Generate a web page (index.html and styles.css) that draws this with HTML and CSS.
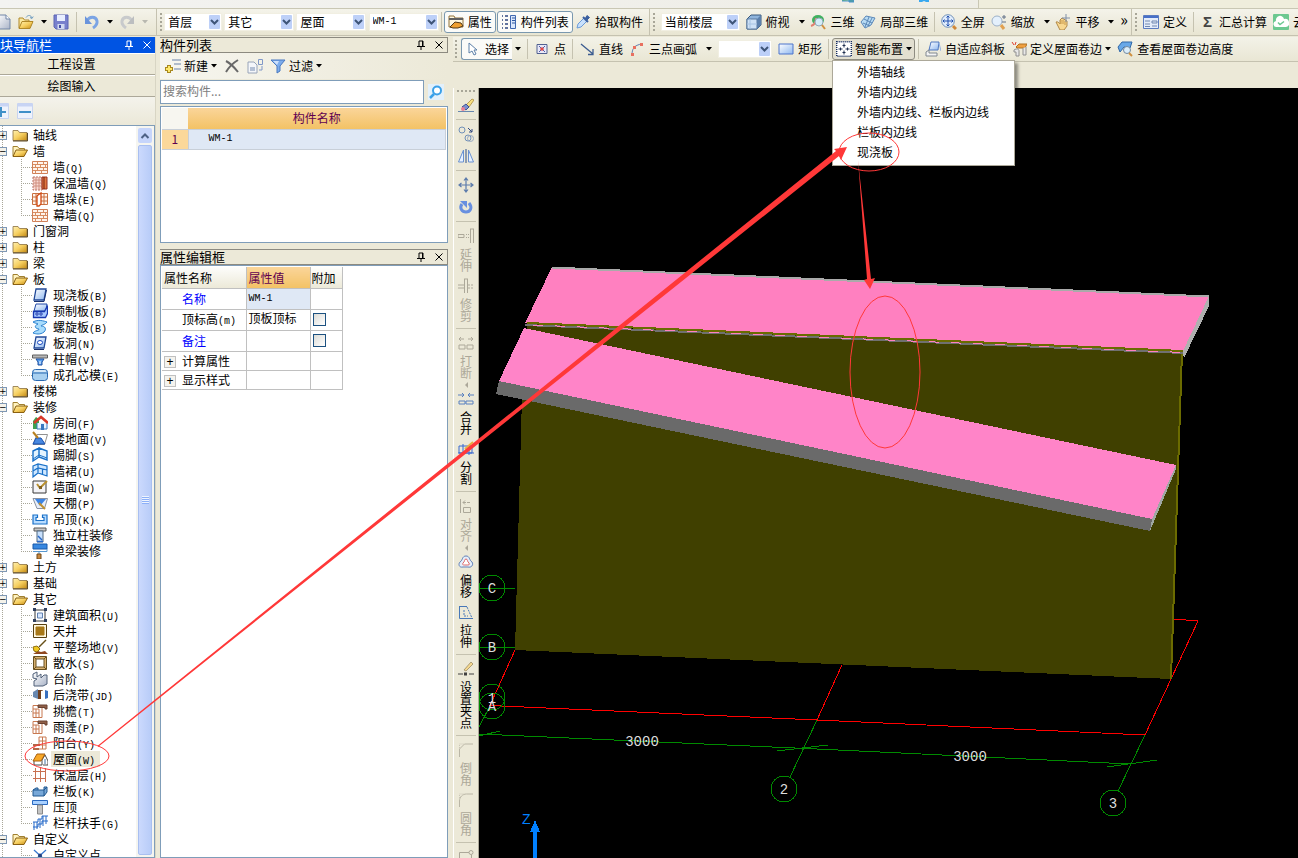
FILE: index.html
```
<!DOCTYPE html>
<html lang="zh-CN">

<head>
    <meta charset="UTF-8">
    <meta name="viewport" content="width=device-width, initial-scale=1.0">
    <title>屋面 - 绘图输入</title>
    <link rel="stylesheet" href="styles.css">
</head>

<body>
    <svg class="sprite" width="0" height="0" aria-hidden="true">
        <defs>
            <linearGradient id="gold" x1="0" y1="0" x2="1" y2="1"><stop offset="0" stop-color="#fff0b0"/><stop offset=".5" stop-color="#f6cf60"/><stop offset="1" stop-color="#c48a14"/></linearGradient>
            <linearGradient id="sky" x1="0" y1="0" x2="1" y2="1"><stop offset="0" stop-color="#fff"/><stop offset="1" stop-color="#8fb8f0"/></linearGradient>
            <linearGradient id="grey" x1="0" y1="0" x2="1" y2="1"><stop offset="0" stop-color="#fff"/><stop offset="1" stop-color="#aab4c8"/></linearGradient>
        </defs>
        <!-- 通用 -->
        <symbol id="down" viewBox="0 0 6 4"><path d="M0 0h6L3 3.5z"/></symbol>
        <symbol id="chev" viewBox="0 0 11 14"><rect width="11" height="14" rx="1" fill="#bdd0f8"/><path d="M2 5l3.500 3.500L9 5" fill="none" stroke="#3e5578" stroke-width="2"/></symbol>
        <symbol id="pin" viewBox="0 0 10 10"><path d="M3 1h4v5M3 1v5M6.500 1v5M1 6.500h8M5 6v4" fill="none" stroke="currentColor"/></symbol>
        <symbol id="close" viewBox="0 0 10 10"><path d="M1.500 1.500l7 7M8.500 1.500l-7 7" fill="none" stroke="currentColor"/></symbol>
        <symbol id="folder" viewBox="0 0 16 16"><path d="M1 13V3.500h5l1.500 2H15V13.500H1z" fill="url(#gold)" stroke="#8a7040" stroke-width=".8"/><path d="M1 14h14.500V6" fill="none" stroke="#5c4a28"/></symbol>
        <symbol id="open" viewBox="0 0 16 16"><path d="M1 13V3.500h4.500l1.500 2h5.500V8" fill="#fff3c0" stroke="#a08030"/><path d="M1 13.500L4 7h11.500l-3.500 6.500z" fill="url(#gold)" stroke="#8a6010"/></symbol>
        <!-- 主工具栏 -->
        <symbol id="new" viewBox="0 0 16 16"><path d="M2 1h9l4 4v10H2z" fill="url(#grey)" stroke="#7387a8"/><path d="M11 1v4h4" fill="#fff" stroke="#7387a8"/></symbol>
        <symbol id="openfile" viewBox="0 0 16 16"><path d="M1 14V4h4l1.500 2H11v2" fill="#fbe9a0" stroke="#b08828"/><path d="M1 14.500L4 7.500h11l-3 7z" fill="url(#gold)" stroke="#b08828"/><path d="M8 3.500C10 .5 13 1 14 4m-2-.5l2 1 1.200-2" fill="none" stroke="#6f9cc0"/></symbol>
        <symbol id="save" viewBox="0 0 16 16"><path d="M1 1h14v14H3l-2-2z" fill="#7880cc" stroke="#5a64b4"/><path d="M4 1h8v6H4z" fill="#e8eeff"/><path d="M4.500 10h7v5h-7z" fill="#d0d8f0"/><path d="M6 11h2v3H6z" fill="#4450a8"/></symbol>
        <symbol id="undo" viewBox="0 0 16 16"><path d="M3 7c2-5 9-5 10 0 .5 3-1 5-4 7" fill="none" stroke="#7ba4e4" stroke-width="3"/><path d="M1 2v8h7z" fill="#6a94dc"/></symbol>
        <symbol id="redo" viewBox="0 0 16 16"><path d="M13 7c-2-5-9-5-10 0-.5 3 1 5 4 7" fill="none" stroke="#c8cacc" stroke-width="3"/><path d="M15 2v8H8z" fill="#bcbec0"/></symbol>
        <symbol id="prop" viewBox="0 0 16 16"><path d="M1 2h5l1 2h8v9H1z" fill="#fff8e0" stroke="#907038"/><path d="M1 5h14" stroke="#606060" stroke-width="2"/><path d="M2 13l5-5 6 1 2 3-5 2H5z" fill="#f0a030" stroke="#503818"/></symbol>
        <symbol id="complist" viewBox="0 0 16 16"><path d="M1 2h1M4 2h3M1 6h1M4 6h3M1 10h1M4 10h3M1 14h1M4 14h3" stroke="#304880" stroke-width="1.500"/><path d="M9.500 1.500h5v13h-5z" fill="#dce8fc" stroke="#4068b0"/><path d="M11 4h3M11 6.500h3M11 9h3" stroke="#3058a0"/></symbol>
        <symbol id="pick" viewBox="0 0 16 16"><path d="M2 14l1-4 6-6 3 3-6 6z" fill="#c8e0fc" stroke="#6c9cd8"/><path d="M8 3l5 5" stroke="#3c60a0" stroke-width="2"/><path d="M10 5l2-3.500 2.500 2L12 6" fill="#3c60a0" stroke="#3c60a0"/></symbol>
        <symbol id="cube" viewBox="0 0 16 16"><path d="M1 5l4-4h10v10l-4 4H1z" fill="#8fb4dc" stroke="#38587c"/><path d="M1 5h10v10H1z" fill="#cfe2f6" stroke="#5878a0"/><path d="M11 5l4-4v10l-4 4z" fill="#5c80ac"/><path d="M4 5v10M1 10h10" stroke="#a8c4e4"/></symbol>
        <symbol id="orbit" viewBox="0 0 16 16"><ellipse cx="8" cy="6" rx="6" ry="5" fill="#40b060"/><path d="M1 12c3-1 5-4 5-8" fill="none" stroke="#e08070" stroke-width="2"/><circle cx="9" cy="8" r="4" fill="#d4ecf8" stroke="#90a8b8"/><path d="M12 11l3 4" stroke="#d09040" stroke-width="2"/></symbol>
        <symbol id="part3d" viewBox="0 0 16 16"><path d="M1 8l5-6 9 2-4 7-6 3z" fill="#b8dcf4" stroke="#5c88b8"/><path d="M4 5l8 4M3 9l7 3M9 3L5 13M12 4L8 12" stroke="#5c88b8"/></symbol>
        <symbol id="full" viewBox="0 0 16 16"><circle cx="7" cy="7" r="6.300" fill="#e0ecfc" stroke="#7090b8"/><path d="M7 2v10M2 7h10M5.500 3.500L7 2l1.500 1.500M5.500 10.500L7 12l1.500-1.500M3.500 5.500L2 7l1.500 1.500M10.500 5.500L12 7l-1.500 1.500" fill="none" stroke="#2050b0"/><path d="M12 12l3 3" stroke="#d08838" stroke-width="3"/></symbol>
        <symbol id="zoom" viewBox="0 0 16 16"><circle cx="6" cy="7" r="5" fill="#e4f0fc" stroke="#9cb0c8"/><path d="M10 11l3 4" stroke="#e0a050" stroke-width="3"/><path d="M11 3h4M13 1v4M11 8h4" stroke="#607088"/></symbol>
        <symbol id="pan" viewBox="0 0 16 16"><path d="M1 8c2-1 4 2 4 2V6l2-2 5 3v5l-3 4H5z" fill="#f8d890" stroke="#b08848"/><path d="M6 6v4M8 6v4M10 7v4" stroke="#c89848"/><path d="M11 0v8M7 4h8" stroke="#8090a8"/></symbol>
        <symbol id="define" viewBox="0 0 16 16"><path d="M.5 1.500h15v13H.5z" fill="#e4ecfa" stroke="#5c7cc0"/><path d="M1 3h14" stroke="#4870c8" stroke-width="2"/><path d="M2 7h5M2 10h5M2 12.500h5M9 7h5v2H9zM9 12h5" fill="none" stroke="#7088b0"/></symbol>
        <symbol id="cloud" viewBox="0 0 16 16"><rect width="16" height="16" rx="1" fill="#6cc890"/><path d="M4 13a3 3 0 0 1-1-6 4 4 0 0 1 8-2 4 4 0 0 1 2 8z" fill="#fff"/><path d="M5 8.500l2 2 4-3" fill="none" stroke="#6cc890" stroke-width="1.500"/></symbol>
        <!-- 绘图工具栏 -->
        <symbol id="cursor" viewBox="0 0 16 16"><path d="M4 2v10l3-2 2 4 2-1-2-4h3z" fill="#fff" stroke="#5c80a8"/></symbol>
        <symbol id="point" viewBox="0 0 16 16"><path d="M3 3.500h10v9H3z" fill="#e8e8f8" stroke="#506090"/><path d="M5 5l6 6M11 5l-6 6" stroke="#5060a8"/><circle cx="8" cy="8" r="1.800" fill="#e04848"/></symbol>
        <symbol id="line" viewBox="0 0 16 16"><path d="M2 3l12 10M14 8v5.500H9" fill="none" stroke="#3c5c90" stroke-width="1.300"/></symbol>
        <symbol id="arc" viewBox="0 0 16 16"><path d="M3 14C3 8 5 4 13 3" fill="none" stroke="#6080b0"/><path d="M2 12h3v3H2zM4 5h3v3H4zM11 2h3v3h-3z" fill="#e87060"/></symbol>
        <symbol id="rect" viewBox="0 0 16 16"><path d="M1 3h14v10H1z" fill="url(#sky)" stroke="#4c74cc"/></symbol>
        <symbol id="smart" viewBox="0 0 16 16"><path d="M.7 .7h14.600v14.600H.7z" fill="#fff" stroke="#102860" stroke-width="1.400" stroke-dasharray="1 1"/><path d="M8 2.500v4M8 9.500v4M2.500 8h4M9.500 8h4M6.500 4.500h3M6.500 11.500h3M4.500 6.500v3M11.500 6.500v3" stroke="#203050"/></symbol>
        <symbol id="slope" viewBox="0 0 16 16"><path d="M6 1h8l-1 8H4z" fill="url(#sky)" stroke="#5078c0"/><path d="M14 2l2 8" stroke="#90b0e0"/><path d="M1 11l3-2v3h8v3H1z" fill="#f4f4f4" stroke="#808890"/></symbol>
        <symbol id="curl" viewBox="0 0 16 16"><path d="M5 6l3-3h8l-2 4H6z" fill="#f0a040" stroke="#b07020"/><path d="M3 9c3-2 5-1 5 1v5H5v-4H3zM12 7v7h3V6" fill="#e8e8e8" stroke="#909090"/><path d="M1 1l2 3M5 1L4 4" stroke="#e04030"/></symbol>
        <symbol id="curlview" viewBox="0 0 16 16"><path d="M1 6l4-5h10l-2 6-6-1-4 5z" fill="#68a8e8" stroke="#3068a8"/><circle cx="10" cy="9" r="3.500" fill="#dceefa" stroke="#7088a0"/><path d="M12 12l3 3" stroke="#d09040" stroke-width="2"/></symbol>
        <!-- 构件列表 -->
        <symbol id="add" viewBox="0 0 16 16"><path d="M7 2h9M9 6h7M9 11h7" stroke="#98a8c0" stroke-width="1.500"/><path d="M4 7v8M0 11h8" stroke="#a88820" stroke-width="4"/><path d="M4 8v6M1 11h6" stroke="#ffe868" stroke-width="2"/></symbol>
        <symbol id="del" viewBox="0 0 16 16"><path d="M2 3c4 2 8 6 12 11M14 2C9 5 5 9 2 14" fill="none" stroke="#686868" stroke-width="2"/></symbol>
        <symbol id="copy" viewBox="0 0 16 16"><path d="M1 4h6l3 3v8H1z" fill="#f4f6fa" stroke="#98a4b8"/><path d="M3 9h5v4H3z" fill="#b4c0d4"/><path d="M11.500 1.500h4v5h-4zM15 8v4h-3" fill="none" stroke="#8098c8"/></symbol>
        <symbol id="filter" viewBox="0 0 16 16"><path d="M1 2h14l-5 6v5l-3 2V8z" fill="#7cacec" stroke="#4878c0"/><path d="M3 3h6L7 7z" fill="#cce0fc"/></symbol>
        <symbol id="find" viewBox="0 0 16 16"><rect width="16" height="16" fill="#e2f0fb"/><circle cx="9" cy="6.500" r="4" fill="#fff" stroke="#3aa0e8" stroke-width="2"/><path d="M6 10l-4 4" stroke="#3aa0e8" stroke-width="2.500"/></symbol>
        <symbol id="plus" viewBox="0 0 16 16"><path d="M.5 .5h15v15H.5z" fill="#eef2fc" stroke="#c8d4f0"/><path d="M1 2h14" stroke="#c8d4f4" stroke-width="3"/><path d="M3 9h10M8 4v10" stroke="#4090c8" stroke-width="2"/></symbol>
        <symbol id="minus" viewBox="0 0 16 16"><path d="M.5 .5h15v15H.5z" fill="#eef2fc" stroke="#c8d4f0"/><path d="M1 2h14" stroke="#c8d4f4" stroke-width="3"/><path d="M2 9h12" stroke="#4090c8" stroke-width="2"/></symbol>
        <!-- 构件树 -->
        <symbol id="brick" viewBox="0 0 16 16"><path d="M.5 2.500h15v12H.5z" fill="#fff4ec" stroke="#d08058"/><path d="M1 5.500h14M1 8.500h14M1 11.500h14M5.500 3v2.500M11.500 3v2.500M3.500 6v2.500M8.500 6v2.500M13.500 6v2.500M5.500 9v2.500M11.500 9v2.500M3.500 12v2.500M9.500 12v2.500" stroke="#d88c60"/></symbol>
        <symbol id="brickhot" viewBox="0 0 16 16"><path d="M1 2h9v13H1z" fill="#f8d8d0" stroke="#b87060" stroke-dasharray="2 1"/><path d="M1 5h9M1 8h9M1 11h9M4 2v13M7 2v13" stroke="#d09080"/><path d="M10 2h5v12h-5z" fill="#e07840" stroke="#983020"/><path d="M12 2v12" stroke="#782010"/></symbol>
        <symbol id="pier" viewBox="0 0 16 16"><path d="M.5 2.500h15v11H.5zM1 6h14M1 10h14M4 3v10M12 3v10" fill="#fff4ec" stroke="#c87040"/><path d="M6 4l3-2v11l-2 2H5V5z" fill="#fff" stroke="#d04810" stroke-width="1.300"/></symbol>
        <symbol id="slab" viewBox="0 0 16 16"><path d="M4 2h10l-2 11H2z" fill="url(#sky)" stroke="#204898" stroke-width="1.300"/><path d="M2 14.500h10L14.500 3" fill="none" stroke="#183070"/></symbol>
        <symbol id="precast" viewBox="0 0 16 16"><path d="M4 1h11l-1 7H2z" fill="url(#sky)" stroke="#2048a8"/><path d="M1.500 8.500h11l3-6v8l-2 4h-12z" fill="#a8c8ff" stroke="#1838b0" stroke-width="1.300"/><path d="M4 10h2v2H4zM8 10h2v2H8z" fill="#fff" stroke="#1838b0"/></symbol>
        <symbol id="spiral" viewBox="0 0 16 16"><path d="M1 3c5-3 11-1 14 0-2 3-6 3-6 4 4 0 6 3 3 6-4 3-8 2-11 1 2-3 6-2 6-4-3 0-6-3-1-5-2-1-4-1-5-2z" fill="#a8dcfc" stroke="#2880d0"/></symbol>
        <symbol id="hole" viewBox="0 0 16 16"><path d="M4 2h10l-2 11H2z" fill="url(#sky)" stroke="#204898" stroke-width="1.300"/><ellipse cx="8" cy="7.500" rx="2.500" ry="2" fill="#fff" stroke="#1848c0"/><path d="M2 14.500h10" stroke="#183070"/></symbol>
        <symbol id="cap" viewBox="0 0 16 16"><path d="M.5 4h15v3H.5z" fill="#b8b8b8" stroke="#606060"/><path d="M4 8h8l-2 3v3H6v-3z" fill="#58a0f0" stroke="#2050a0"/><path d="M7.500 10h1v3h-1z" fill="#fff"/></symbol>
        <symbol id="core" viewBox="0 0 16 16"><rect x=".5" y="2.500" width="15" height="11" rx="3" fill="#a8d0f0" stroke="#2868b0"/><path d="M1 6h14" stroke="#2868b0"/><path d="M2 4h12" stroke="#fff"/></symbol>
        <symbol id="room" viewBox="0 0 16 16"><path d="M1 6l3-4 3 2v10H1z" fill="#40a050"/><path d="M5 8v6h10V8" fill="#e8f4ff" stroke="#3878c0"/><path d="M2 8l7-6 7 6" fill="none" stroke="#d83828" stroke-width="2.500"/><path d="M9 9h3v6H9z" fill="#3878c0"/></symbol>
        <symbol id="floor" viewBox="0 0 16 16"><path d="M5 3.500h10.500l-3 10H1z" fill="#fff" stroke="#909090"/><path d="M4 7h5l4 6H1z" fill="#4888e0" stroke="#1850b0"/><path d="M1 1l5 6" stroke="#b88020" stroke-width="2"/></symbol>
        <symbol id="skirt" viewBox="0 0 16 16"><path d="M1 4l6-3v9l-6 4zM7 1l8 3v9l-8-3z" fill="#e4f4ff" stroke="#1870c8" stroke-width="1.400"/><path d="M1 12l6-4 8 3" fill="none" stroke="#1870c8"/></symbol>
        <symbol id="dado" viewBox="0 0 16 16"><path d="M1 3l5-2 9 2v10l-9-3-5 4zM1 8l5-3 9 2M6 1v9M10.500 6v5" fill="#d0e8ff" stroke="#1870c8" stroke-width="1.200"/></symbol>
        <symbol id="wallface" viewBox="0 0 16 16"><path d="M1 2h13v12H1z" fill="#f4f4f8" stroke="#383838"/><path d="M5 5l3 4 7-7" fill="none" stroke="#b89030" stroke-width="2"/><path d="M7 7h3v3H7z" fill="#806020"/></symbol>
        <symbol id="ceiling" viewBox="0 0 16 16"><path d="M1 3.500h14.500l-3 10H5z" fill="#e8eef8" stroke="#8890a0"/><path d="M3 4h11l-6 7z" fill="#3c84e4"/><path d="M7 8l6 6" stroke="#c09030" stroke-width="2"/></symbol>
        <symbol id="hang" viewBox="0 0 16 16"><path d="M1 4h4.500v2.500H4v3h8v-3h-1.500V4H15v9H1z" fill="#b8dcff" stroke="#1870c8" stroke-width="1.200"/></symbol>
        <symbol id="column" viewBox="0 0 16 16"><path d="M2 1h12v3H2z" fill="#c8c8c8" stroke="#585858"/><path d="M5 4h6v11H5z" fill="#c8e0fc" stroke="#506880"/><path d="M6 9l4 4M5 14.500h6" stroke="#2868c8" stroke-width="1.500"/></symbol>
        <symbol id="beamdec" viewBox="0 0 16 16"><path d="M1 1h14v5H1z" fill="#3888e0" stroke="#1858a8"/><path d="M1 8.500h14V6M7 8v3" fill="none" stroke="#5898d0"/><path d="M5 11h4v5H5z" fill="#c88840" stroke="#704818"/></symbol>
        <symbol id="area" viewBox="0 0 16 16"><path d="M3 3h10v11H3z" fill="#fff" stroke="#383838"/><path d="M5.500 6h5v5h-5z" fill="#d8e8ff" stroke="#6080b0"/><path d="M1 1h3v3H1zM12 1h3v3h-3zM1 12h3v3H1zM12 12h3v3h-3z" fill="#304060"/></symbol>
        <symbol id="patio" viewBox="0 0 16 16"><path d="M1.500 1.500h13v13h-13z" fill="#fff8e0" stroke="#584010"/><path d="M4 4h8v8H4z" fill="#a87818" stroke="#a87818"/></symbol>
        <symbol id="level" viewBox="0 0 16 16"><path d="M1 15l5-3 3 1 4-1 3 3z" fill="#904820"/><path d="M14 1L7 8" stroke="#685018" stroke-width="1.500"/><path d="M1 8l4-1 3 3-3 3-3-1z" fill="#f0c820" stroke="#907010"/></symbol>
        <symbol id="apron" viewBox="0 0 16 16"><path d="M1.500 1.500h13v13h-13z" fill="#d8b070" stroke="#685020"/><path d="M4 4h8v8H4z" fill="#fff" stroke="#685020"/><path d="M2 2l2 2M14 2l-2 2M2 14l2-2M14 14l-2-2" stroke="#685020"/></symbol>
        <symbol id="steps" viewBox="0 0 16 16"><path d="M1 3l4-2v5l4-3v4l3-3h3v9l-4 2H2v-5l3-2-4-1z" fill="url(#grey)" stroke="#506078"/></symbol>
        <symbol id="strip" viewBox="0 0 16 16"><path d="M1 5l5-3v10l-5-2z" fill="#6888b0"/><path d="M6 3h5v9H6z" fill="#704020"/><path d="M9 4l4-1v8l-4 2z" fill="#fff"/><path d="M13 3l3 1v7l-3 1z" fill="#3870c0"/></symbol>
        <symbol id="eave" viewBox="0 0 16 16"><path d="M1 2.500h9v12H1zM1 6h6M1 10h6M4 6v8M7 6v9" fill="#fff" stroke="#c87850"/><path d="M6 2h9v4h-2V4.500H6z" fill="#906048" stroke="#684030"/></symbol>
        <symbol id="balcony" viewBox="0 0 16 16"><path d="M7 2h7v12H2v-4h5zM7 6h7M7 10h7M10.500 2v12" fill="#fff" stroke="#c87850"/><path d="M1 9h7v2H1zM1 13h6v2H1z" fill="#b06848"/></symbol>
        <symbol id="roof" viewBox="0 0 16 16"><path d="M2 9v5h8V9l3-5 3 6v4h-5" fill="#fff" stroke="#484848"/><path d="M5 3h8l-4 7H1z" fill="#f8a828" stroke="#a86010"/><path d="M12 8h2v5h-2z" fill="#a0b8d0"/></symbol>
        <symbol id="insul" viewBox="0 0 16 16"><path d="M3.500 1v14M8.500 1v14M13.500 1v14M1 4.500h13M1 11.500h13" stroke="#c87050"/></symbol>
        <symbol id="railslab" viewBox="0 0 16 16"><path d="M1 7h11v6H1zM12 7l3-3v5l-3 4M1 7l3-2h2v2M12 7V4h3" fill="#78a8d8" stroke="#205890"/></symbol>
        <symbol id="coping" viewBox="0 0 16 16"><path d="M.5 1.500h15v4H.5z" fill="#a8d0ff" stroke="#2868c0"/><path d="M5.500 6h5v9h-5z" fill="#c4c4c4" stroke="#888"/></symbol>
        <symbol id="handrail" viewBox="0 0 16 16"><path d="M1 7h5V4h4V1h6M1 12h5V9h4V6h6M2 7v8M5 7v7M8 4v9M11 1v10M14 1v8" fill="none" stroke="#2468c8"/></symbol>
        <symbol id="custom" viewBox="0 0 16 16"><path d="M2 3l12 11M14 3L2 14" stroke="#3878d0" stroke-width="1.300"/><circle cx="8" cy="8.500" r="2" fill="#204080"/></symbol>
        <!-- 修改工具栏 -->
        <symbol id="erase" viewBox="0 0 16 16"><path d="M8 8l6-6 2 1-5 7z" fill="#f8e080" stroke="#a08030" stroke-width=".7"/><path d="M4 10l4-3 3 3-3 3z" fill="#7890d0" stroke="#405090"/><circle cx="5" cy="12" r="2" fill="#e88098"/><path d="M0 14.500h16" stroke="#6888b0"/></symbol>
        <symbol id="copy2" viewBox="0 0 16 16"><circle cx="4" cy="4" r="3" fill="none" stroke="#7090b8"/><circle cx="10" cy="12" r="3" fill="none" stroke="#7090b8"/><circle cx="12.500" cy="12.500" r="3" fill="none" stroke="#98a8c0"/><path d="M10 2l4 4M14 3v3h-3" fill="none" stroke="#304880"/></symbol>
        <symbol id="mirror" viewBox="0 0 16 16"><path d="M5.500 2v12h-5zM10.500 2v12h5z" fill="#e8f2ff" stroke="#6890d0"/><path d="M8 1v14" stroke="#305088"/></symbol>
        <symbol id="move" viewBox="0 0 16 16"><path d="M8 1v14M1 8h14M6 3.500L8 1l2 2.500M6 12.500L8 15l2-2.500M3.500 6L1 8l2.500 2M12.500 6L15 8l-2.500 2" fill="none" stroke="#5c7cac" stroke-width="1.200"/></symbol>
        <symbol id="rotate" viewBox="0 0 16 16"><path d="M4 5c-3 4 0 8 4 8s7-4 3-9" fill="none" stroke="#6890e0" stroke-width="3"/><path d="M2 2h7v7z" fill="#6890e0"/></symbol>
        <symbol id="extend" viewBox="0 0 16 16"><path d="M0 6.500h6v3H0zM8 6.500h1M8 9.500h1M10 6.500h1M10 9.500h1M12.500 1v14M15.500 1v14M12 1h4" fill="none" stroke="#aca899"/></symbol>
        <symbol id="trim" viewBox="0 0 16 16"><path d="M0 7h6M0 10h6M6.500 1v14M9.500 1v14M6 1h4M10 7h2M13 7h2M10 10h2M13 10h2" stroke="#aca899"/></symbol>
        <symbol id="breaks" viewBox="0 0 16 16"><path d="M1 4h5M10 4h5M3 2L1 4l2 2M13 2l2 2-2 2M1 10h6v4H1zM9 10h6v4H9z" fill="none" stroke="#aca899"/></symbol>
        <symbol id="merge" viewBox="0 0 16 16"><path d="M0 4h6M10 4h6M4 2l2 2-2 2M12 2l-2 2 2 2M1 10h6v3H1zM8 10h7v3H8z" fill="none" stroke="#5880c0"/></symbol>
        <symbol id="split" viewBox="0 0 16 16"><path d="M1 5h13v7H1zM5 3v11M11 5v9M0 12h16" fill="none" stroke="#3868d0"/><path d="M7 8l8-7" stroke="#e8b040" stroke-width="2"/></symbol>
        <symbol id="align" viewBox="0 0 16 16"><path d="M2.500 1v14M5 4.500h3M5 4.500l2-2M5 4.500l2 2M9 4.500h3M5.500 9.500h7v5h-7z" fill="none" stroke="#aca899"/></symbol>
        <symbol id="offset" viewBox="0 0 16 16"><path d="M8 2c4 0 3 4 6 6 2 3-1 6-4 5H5C1 14 0 10 2 8c3-2 2-6 6-6z" fill="#e4eefa" stroke="#6080b8"/><path d="M8 5c2 0 1 3 3 4 1 2 0 2-3 2s-4 0-3-2c2-1 1-4 3-4z" fill="#fff" stroke="#e06868"/></symbol>
        <symbol id="stretch" viewBox="0 0 16 16"><path d="M1.500 2.500H9M1.500 2v12.500H15" fill="none" stroke="#4878b8"/><path d="M9 3l5 11M6 6v6h4" fill="none" stroke="#4878b8" stroke-dasharray="2 1"/></symbol>
        <symbol id="grip" viewBox="0 0 16 16"><path d="M6 9l7-8 2 2-7 7z" fill="#f4d890" stroke="#908058" stroke-width=".7"/><path d="M0 13h5M11 13h5" stroke="#404040"/><path d="M6 11.500h3v3H6z" fill="#404040"/></symbol>
        <symbol id="chamfer" viewBox="0 0 16 16"><path d="M1.500 15V7l5-5H15" fill="none" stroke="#bab6a6"/><path d="M1.500 6V2H6" fill="none" stroke="#cac6b6" stroke-dasharray="1 1"/></symbol>
        <symbol id="round" viewBox="0 0 16 16"><path d="M1.500 15V9c0-4 3-7 7-7H15" fill="none" stroke="#bab6a6"/><path d="M1.500 6V2H6" fill="none" stroke="#cac6b6" stroke-dasharray="1 1"/></symbol>
        <symbol id="more" viewBox="0 0 16 16"><path d="M1.500 15V3.500H11M13.500 6v9" fill="none" stroke="#aca899"/><circle cx="13" cy="3.500" r="2" fill="none" stroke="#aca899"/></symbol>
    </svg>

    <div class="ribbon">
        <div class="ribbon-tab">
            <svg class="bit" viewBox="0 0 12 3"><path d="M0 0v1h12M7 0h5v2H7z" fill="#58b848" stroke="#4890d0"/></svg>
            <svg class="bit" viewBox="0 0 12 3"><path d="M1 0h10v2H8L6 1 4 2H1z" fill="#38a8f0"/></svg>
        </div>
    </div>

    <header class="toolbars">
        <div class="band band-file">
            <button class="tool" aria-label="新建文件"><svg class="ic"><use href="#new"/></svg></button>
            <button class="tool" aria-label="打开"><svg class="ic"><use href="#openfile"/></svg></button>
            <button class="tool" aria-label="打开列表"><svg class="dn"><use href="#down"/></svg></button>
            <button class="tool" aria-label="保存"><svg class="ic"><use href="#save"/></svg></button>
            <i class="sep"></i>
            <button class="tool" aria-label="撤销"><svg class="ic"><use href="#undo"/></svg></button>
            <button class="tool" aria-label="撤销列表"><svg class="dn"><use href="#down"/></svg></button>
            <button class="tool" aria-label="恢复"><svg class="ic"><use href="#redo"/></svg></button>
            <button class="tool off" aria-label="恢复列表"><svg class="dn"><use href="#down"/></svg></button>
        </div>
        <div class="band band-comp">
            <i class="grip"></i>
            <span class="combo narrow"><select aria-label="楼层"><option>首层</option></select><svg><use href="#chev"/></svg></span>
            <span class="combo"><select aria-label="构件分类"><option>其它</option></select><svg><use href="#chev"/></svg></span>
            <span class="combo"><select aria-label="构件类型"><option>屋面</option></select><svg><use href="#chev"/></svg></span>
            <span class="combo mono"><select aria-label="构件"><option>WM-1</option></select><svg><use href="#chev"/></svg></span>
            <i class="sep"></i>
            <div class="pair">
                <button class="tool on"><svg class="ic"><use href="#prop"/></svg>属性</button>
                <button class="tool on"><svg class="ic"><use href="#complist"/></svg>构件列表</button>
            </div>
            <button class="tool"><svg class="ic"><use href="#pick"/></svg>拾取构件</button>
        </div>
        <div class="band band-view">
            <i class="grip"></i>
            <span class="combo wide"><select aria-label="显示楼层"><option>当前楼层</option></select><svg><use href="#chev"/></svg></span>
            <button class="tool drop"><svg class="ic"><use href="#cube"/></svg>俯视<svg class="dn"><use href="#down"/></svg></button>
            <button class="tool"><svg class="ic"><use href="#orbit"/></svg>三维</button>
            <button class="tool"><svg class="ic"><use href="#part3d"/></svg>局部三维</button>
            <i class="sep"></i>
            <button class="tool"><svg class="ic"><use href="#full"/></svg>全屏</button>
            <button class="tool drop"><svg class="ic"><use href="#zoom"/></svg>缩放<svg class="dn"><use href="#down"/></svg></button>
            <button class="tool drop"><svg class="ic"><use href="#pan"/></svg>平移<svg class="dn"><use href="#down"/></svg></button>
            <button class="tool more">»</button>
        </div>
        <div class="band band-calc">
            <i class="grip"></i>
            <button class="tool"><svg class="ic"><use href="#define"/></svg>定义</button>
            <i class="sep"></i>
            <button class="tool"><b class="sigma">Σ</b>汇总计算</button>
            <button class="tool"><svg class="ic"><use href="#cloud"/></svg>云</button>
        </div>
    </header>

    <main class="work">
        <!-- 模块导航 -->
        <nav class="nav">
            <h2 class="cap cap-active">块导航栏
                <span><button aria-label="固定"><svg><use href="#pin"/></svg></button><button aria-label="关闭"><svg><use href="#close"/></svg></button></span>
            </h2>
            <button class="mod">工程设置</button>
            <button class="mod">绘图输入</button>
            <div class="nav-tools">
                <button class="tool" aria-label="全部展开"><svg class="ic"><use href="#plus"/></svg></button>
                <button class="tool" aria-label="全部折叠"><svg class="ic"><use href="#minus"/></svg></button>
            </div>
            <div class="treebox">
                <ul class="tree">
                    <li><button class="tg">+</button><svg class="ic"><use href="#folder"/></svg><a href="#">轴线</a></li>
                    <li><button class="tg">−</button><svg class="ic"><use href="#open"/></svg><a href="#">墙</a>
                        <ul>
                            <li><svg class="ic"><use href="#brick"/></svg><a href="#">墙<kbd>(Q)</kbd></a></li>
                            <li><svg class="ic"><use href="#brickhot"/></svg><a href="#">保温墙<kbd>(Q)</kbd></a></li>
                            <li><svg class="ic"><use href="#pier"/></svg><a href="#">墙垛<kbd>(E)</kbd></a></li>
                            <li><svg class="ic"><use href="#brick"/></svg><a href="#">幕墙<kbd>(Q)</kbd></a></li>
                        </ul>
                    </li>
                    <li><button class="tg">+</button><svg class="ic"><use href="#folder"/></svg><a href="#">门窗洞</a></li>
                    <li><button class="tg">+</button><svg class="ic"><use href="#folder"/></svg><a href="#">柱</a></li>
                    <li><button class="tg">+</button><svg class="ic"><use href="#folder"/></svg><a href="#">梁</a></li>
                    <li><button class="tg">−</button><svg class="ic"><use href="#open"/></svg><a href="#">板</a>
                        <ul>
                            <li><svg class="ic"><use href="#slab"/></svg><a href="#">现浇板<kbd>(B)</kbd></a></li>
                            <li><svg class="ic"><use href="#precast"/></svg><a href="#">预制板<kbd>(B)</kbd></a></li>
                            <li><svg class="ic"><use href="#spiral"/></svg><a href="#">螺旋板<kbd>(B)</kbd></a></li>
                            <li><svg class="ic"><use href="#hole"/></svg><a href="#">板洞<kbd>(N)</kbd></a></li>
                            <li><svg class="ic"><use href="#cap"/></svg><a href="#">柱帽<kbd>(V)</kbd></a></li>
                            <li><svg class="ic"><use href="#core"/></svg><a href="#">成孔芯模<kbd>(E)</kbd></a></li>
                        </ul>
                    </li>
                    <li><button class="tg">+</button><svg class="ic"><use href="#folder"/></svg><a href="#">楼梯</a></li>
                    <li><button class="tg">−</button><svg class="ic"><use href="#open"/></svg><a href="#">装修</a>
                        <ul>
                            <li><svg class="ic"><use href="#room"/></svg><a href="#">房间<kbd>(F)</kbd></a></li>
                            <li><svg class="ic"><use href="#floor"/></svg><a href="#">楼地面<kbd>(V)</kbd></a></li>
                            <li><svg class="ic"><use href="#skirt"/></svg><a href="#">踢脚<kbd>(S)</kbd></a></li>
                            <li><svg class="ic"><use href="#dado"/></svg><a href="#">墙裙<kbd>(U)</kbd></a></li>
                            <li><svg class="ic"><use href="#wallface"/></svg><a href="#">墙面<kbd>(W)</kbd></a></li>
                            <li><svg class="ic"><use href="#ceiling"/></svg><a href="#">天棚<kbd>(P)</kbd></a></li>
                            <li><svg class="ic"><use href="#hang"/></svg><a href="#">吊顶<kbd>(K)</kbd></a></li>
                            <li><svg class="ic"><use href="#column"/></svg><a href="#">独立柱装修</a></li>
                            <li><svg class="ic"><use href="#beamdec"/></svg><a href="#">单梁装修</a></li>
                        </ul>
                    </li>
                    <li><button class="tg">+</button><svg class="ic"><use href="#folder"/></svg><a href="#">土方</a></li>
                    <li><button class="tg">+</button><svg class="ic"><use href="#folder"/></svg><a href="#">基础</a></li>
                    <li><button class="tg">−</button><svg class="ic"><use href="#open"/></svg><a href="#">其它</a>
                        <ul>
                            <li><svg class="ic"><use href="#area"/></svg><a href="#">建筑面积<kbd>(U)</kbd></a></li>
                            <li><svg class="ic"><use href="#patio"/></svg><a href="#">天井</a></li>
                            <li><svg class="ic"><use href="#level"/></svg><a href="#">平整场地<kbd>(V)</kbd></a></li>
                            <li><svg class="ic"><use href="#apron"/></svg><a href="#">散水<kbd>(S)</kbd></a></li>
                            <li><svg class="ic"><use href="#steps"/></svg><a href="#">台阶</a></li>
                            <li><svg class="ic"><use href="#strip"/></svg><a href="#">后浇带<kbd>(JD)</kbd></a></li>
                            <li><svg class="ic"><use href="#eave"/></svg><a href="#">挑檐<kbd>(T)</kbd></a></li>
                            <li><svg class="ic"><use href="#eave"/></svg><a href="#">雨蓬<kbd>(P)</kbd></a></li>
                            <li><svg class="ic"><use href="#balcony"/></svg><a href="#">阳台<kbd>(Y)</kbd></a></li>
                            <li><svg class="ic"><use href="#roof"/></svg><a href="#" class="cur">屋面<kbd>(W)</kbd></a></li>
                            <li><svg class="ic"><use href="#insul"/></svg><a href="#">保温层<kbd>(H)</kbd></a></li>
                            <li><svg class="ic"><use href="#railslab"/></svg><a href="#">栏板<kbd>(K)</kbd></a></li>
                            <li><svg class="ic"><use href="#coping"/></svg><a href="#">压顶</a></li>
                            <li><svg class="ic"><use href="#handrail"/></svg><a href="#">栏杆扶手<kbd>(G)</kbd></a></li>
                        </ul>
                    </li>
                    <li><button class="tg">−</button><svg class="ic"><use href="#open"/></svg><a href="#">自定义</a>
                        <ul>
                            <li><svg class="ic"><use href="#custom"/></svg><a href="#">自定义点</a></li>
                        </ul>
                    </li>
                </ul>
                <div class="scroll">
                    <button aria-label="向上滚动"><svg viewBox="0 0 10 10"><path d="M1.500 7L5 3.500 8.500 7" fill="none" stroke="#4d6185" stroke-width="2"/></svg></button>
                    <div class="thumb"></div>
                </div>
            </div>
        </nav>

        <!-- 构件列表与属性 -->
        <aside class="dock">
            <section class="list">
                <h2 class="cap">构件列表
                    <span><button aria-label="固定"><svg><use href="#pin"/></svg></button><button aria-label="关闭"><svg><use href="#close"/></svg></button></span>
                </h2>
                <div class="list-tools">
                    <button class="tool tight"><svg class="ic"><use href="#add"/></svg>新建<svg class="dn"><use href="#down"/></svg></button>
                    <button class="tool" aria-label="删除"><svg class="ic"><use href="#del"/></svg></button>
                    <button class="tool" aria-label="复制"><svg class="ic"><use href="#copy"/></svg></button>
                    <button class="tool tight"><svg class="ic"><use href="#filter"/></svg>过滤<svg class="dn"><use href="#down"/></svg></button>
                </div>
                <div class="search">
                    <input type="text" placeholder="搜索构件..." aria-label="搜索构件">
                    <button class="tool" aria-label="搜索"><svg class="ic"><use href="#find"/></svg></button>
                </div>
                <div class="sheet">
                    <table class="names">
                        <thead><tr><th class="no"></th><th>构件名称</th></tr></thead>
                        <tbody><tr><td class="no">1</td><td class="mono">WM-1</td></tr></tbody>
                    </table>
                </div>
            </section>
            <section class="props">
                <h2 class="cap">属性编辑框
                    <span><button aria-label="固定"><svg><use href="#pin"/></svg></button><button aria-label="关闭"><svg><use href="#close"/></svg></button></span>
                </h2>
                <div class="sheet">
                    <table class="attrs">
                        <thead><tr><th class="a-name">属性名称</th><th class="a-val">属性值</th><th class="a-add">附加</th></tr></thead>
                        <tbody>
                            <tr><td class="lead blue">名称</td><td class="mono picked">WM-1</td><td></td></tr>
                            <tr><td class="lead">顶标高<kbd>(m)</kbd></td><td class="raised">顶板顶标</td><td><input type="checkbox" aria-label="附加顶标高"></td></tr>
                            <tr><td class="lead blue">备注</td><td></td><td><input type="checkbox" aria-label="附加备注"></td></tr>
                            <tr class="grp"><td><button class="ex">+</button>计算属性</td><td></td><td></td></tr>
                            <tr class="grp"><td><button class="ex">+</button>显示样式</td><td></td><td></td></tr>
                        </tbody>
                    </table>
                </div>
            </section>
        </aside>

        <section class="stage">
            <div class="draw">
                <i class="grip"></i>
                <button class="tool on select"><svg class="ic"><use href="#cursor"/></svg>选择</button>
                <button class="tool" aria-label="选择方式"><svg class="dn"><use href="#down"/></svg></button>
                <i class="sep"></i>
                <button class="tool"><svg class="ic"><use href="#point"/></svg>点</button>
                <i class="sep"></i>
                <button class="tool"><svg class="ic"><use href="#line"/></svg>直线</button>
                <button class="tool drop"><svg class="ic"><use href="#arc"/></svg>三点画弧<svg class="dn"><use href="#down"/></svg></button>
                <span class="combo short"><select aria-label="画弧参数"><option></option></select><svg><use href="#chev"/></svg></span>
                <button class="tool"><svg class="ic"><use href="#rect"/></svg>矩形</button>
                <i class="sep"></i>
                <div class="smart">
                    <button class="tool pressed tight" aria-expanded="true"><svg class="ic"><use href="#smart"/></svg>智能布置<svg class="dn"><use href="#down"/></svg></button>
                    <ul class="menu">
                        <li><button>外墙轴线</button></li>
                        <li><button>外墙内边线</button></li>
                        <li><button>外墙内边线、栏板内边线</button></li>
                        <li><button>栏板内边线</button></li>
                        <li><button>现浇板</button></li>
                    </ul>
                </div>
                <i class="sep"></i>
                <button class="tool"><svg class="ic"><use href="#slope"/></svg>自适应斜板</button>
                <button class="tool tight"><svg class="ic"><use href="#curl"/></svg>定义屋面卷边<svg class="dn"><use href="#down"/></svg></button>
                <button class="tool"><svg class="ic"><use href="#curlview"/></svg>查看屋面卷边高度</button>
            </div>
            <div class="view">
                <div class="edit">
                    <i class="hgrip"></i>
                    <button aria-label="删除"><svg class="ic"><use href="#erase"/></svg></button>
                    <hr>
                    <button aria-label="复制"><svg class="ic"><use href="#copy2"/></svg></button>
                    <button aria-label="镜像"><svg class="ic"><use href="#mirror"/></svg></button>
                    <hr>
                    <button aria-label="移动"><svg class="ic"><use href="#move"/></svg></button>
                    <button aria-label="旋转"><svg class="ic"><use href="#rotate"/></svg></button>
                    <hr>
                    <button disabled><svg class="ic"><use href="#extend"/></svg><span>延伸</span></button>
                    <button disabled><svg class="ic"><use href="#trim"/></svg><span>修剪</span></button>
                    <hr>
                    <button disabled><svg class="ic"><use href="#breaks"/></svg><span>打断</span></button>
                    <i class="side"></i>
                    <button><svg class="ic"><use href="#merge"/></svg><span>合并</span></button>
                    <button><svg class="ic"><use href="#split"/></svg><span>分割</span></button>
                    <hr>
                    <button disabled><svg class="ic"><use href="#align"/></svg><span>对齐</span></button>
                    <i class="side"></i>
                    <button><svg class="ic"><use href="#offset"/></svg><span>偏移</span></button>
                    <button><svg class="ic"><use href="#stretch"/></svg><span>拉伸</span></button>
                    <hr>
                    <button><svg class="ic"><use href="#grip"/></svg><span>设置夹点</span></button>
                    <hr>
                    <button disabled><svg class="ic"><use href="#chamfer"/></svg><span>倒角</span></button>
                    <button disabled><svg class="ic"><use href="#round"/></svg><span>圆角</span></button>
                    <hr>
                    <button disabled aria-label="更多"><svg class="ic"><use href="#more"/></svg></button>
                </div>
                <div class="canvas">
                    <svg viewBox="479 88 819 770" preserveAspectRatio="xMinYMin meet" shape-rendering="crispEdges">
                        <!-- 轴网 -->
                        <g fill="none" stroke="#f00">
                            <path d="M515 650L490 705.500L817 720L1145 735L1198 621L1174 619M842 665L817 720"/>
                        </g>
                        <g fill="none" stroke="#008a00">
                            <path d="M479 588.500h36M479 647.500h36M490 706L479 727M479 734L817 749L1130 764M479 736L500 731M777 751L828 745M1107 767L1157 760M817 720L790 777M1145 735L1118 791"/>
                            <circle cx="492" cy="588" r="13"/>
                            <circle cx="492" cy="647" r="13"/>
                            <circle cx="492" cy="697" r="13"/>
                            <circle cx="492" cy="706" r="13"/>
                            <circle cx="784" cy="789" r="13"/>
                            <circle cx="1113" cy="803" r="13"/>
                        </g>
                        <!-- 墙与屋面板 -->
                        <path d="M527 324L1183 352L1171 679L515 650L522 396z" fill="#404000"/>
                        <path d="M1182 352L1171 679" stroke="#6b6b00" stroke-width="2"/>
                        <path d="M1209 296v10L1184 358L1182 350z" fill="#b0b0b0"/>
                        <path d="M552 267L1209 296L1183 351L525 323z" fill="#ff80c0"/>
                        <path d="M552 267.500L1209 296.500" stroke="#aaa" stroke-width="2"/>
                        <path d="M527 323L1183 351" stroke="#6b6b00" stroke-width="2"/>
                        <path d="M525 325L1183 353" stroke="#707070" stroke-width="2"/>
                        <path d="M533 325L1183 352.500" stroke="#ff80c0" stroke-dasharray="10 12"/>
                        <path d="M1176 465v4L1150 531L1151 518z" fill="#a0a8a4"/>
                        <path d="M499 381L1152 519L1150 531L496 394z" fill="#6a6a6a"/>
                        <path d="M524 328L1176 465L1152 519L499 381z" fill="#ff84c8"/>
                        <g class="axis">
                            <text x="492" y="593">C</text>
                            <text x="492" y="652">B</text>
                            <text x="492" y="703">1</text>
                            <text x="492" y="711">A</text>
                            <text x="784" y="794">2</text>
                            <text x="1113" y="808">3</text>
                            <text x="642" y="746">3000</text>
                            <text x="970" y="761">3000</text>
                        </g>
                        <path d="M533 858V832h-3L535 820L540 832h-3V858z" fill="#0080ff"/>
                        <text class="zaxis" x="522" y="824">Z</text>
                    </svg>
                </div>
            </div>
        </section>
    </main>

    <!-- 操作步骤标注 -->
    <svg class="notes" viewBox="0 0 1298 858" preserveAspectRatio="xMinYMin meet" aria-hidden="true">
        <g fill="none" stroke="#ff3838">
            <ellipse cx="67" cy="756" rx="42" ry="15"/>
            <ellipse cx="869" cy="152" rx="30" ry="19"/>
            <ellipse cx="885" cy="372" rx="35" ry="76"/>
        </g>
        <path d="M98 745.500L836 151L834 149L847 147L841 160L839 156L98 747z" fill="#ff3838"/>
        <path d="M858 160L867 279L864 280L870 289L875 278L871 279z" fill="#ff3838"/>
    </svg>
</body>

</html>
```
FILE: styles.css
```
* {
    box-sizing: border-box;
    margin: 0;
    padding: 0;
}

body {
    display: flex;
    flex-direction: column;
    height: 100vh;
    overflow: hidden;
    background: #ece9d8;
    color: #000;
    font: 12px/16px "Noto Sans CJK SC", sans-serif;
}

button,
input,
select {
    font: inherit;
    color: inherit;
}

button {
    border: 0;
    background: none;
    white-space: nowrap;
}

ul {
    list-style: none;
}

a {
    color: inherit;
    text-decoration: none;
}

kbd,
.mono,
.mono select {
    font-family: "Liberation Mono", monospace;
    font-size: 10px;
}

.sprite {
    position: absolute;
}

.ic {
    flex: none;
    width: 16px;
    height: 16px;
}

.dn {
    flex: none;
    width: 6px;
    height: 4px;
}

/* 顶部 */
.ribbon {
    flex: none;
    height: 9px;
    border-bottom: 1px solid #c9c7b4;
    background: #efeddc;
}

.ribbon-tab {
    display: flex;
    justify-content: flex-end;
    gap: 64px;
    width: 979px;
    height: 9px;
    padding-right: 48px;
    border: 1px solid #c9c7b4;
    border-width: 0 1px 1px 0;
    background: linear-gradient(90deg, #f3f3f1, #eeede6);
}

.bit {
    width: 12px;
    height: 3px;
}

.toolbars {
    display: flex;
    flex: none;
    height: 27px;
    border-bottom: 1px solid #c5c2b0;
    overflow: hidden;
}

.band {
    display: flex;
    flex: none;
    align-items: center;
    justify-content: space-between;
    padding: 0 6px 0 3px;
    border-right: 1px solid #c5c2b0;
    background: linear-gradient(#f4f3ea, #e8e5d2);
}

.band-file {
    width: 162px;
    margin-left: -5px;
    padding: 0 8px 0 0;
}

.band-comp {
    width: 493px;
}

.band-view {
    width: 482px;
    padding-right: 3px;
}

.band-calc {
    flex: 1;
    justify-content: flex-start;
    gap: 6px;
    border: 0;
}

.tool {
    display: flex;
    flex: none;
    align-items: center;
    gap: 4px;
    height: 20px;
}

.tool.drop .dn {
    margin-left: 5px;
}

.tool.tight {
    gap: 3px;
}

.tool.off {
    fill: #b8b8b0;
}

.tool.on {
    height: 22px;
    padding: 0 3px;
    border: 1px solid #7a98af;
    border-radius: 3px;
    background: #fbfbf8;
}

.pair {
    display: flex;
    gap: 1px;
}

.more {
    align-self: flex-start;
    font-size: 16px;
    line-height: 20px;
}

.sigma {
    padding: 0 3px;
    font: bold 15px/20px "Liberation Sans", sans-serif;
    color: #444;
}

.sep {
    flex: none;
    width: 1px;
    height: 20px;
    background: #c5c2b0;
}

.grip {
    flex: none;
    width: 2px;
    height: 18px;
    background: repeating-linear-gradient(#a8a698 0 2px, transparent 2px 4px);
}

.combo {
    display: inline-grid;
    flex: none;
    align-items: center;
    width: 70px;
    height: 18px;
    background: #fff;
}

.combo select {
    grid-area: 1 / 1;
    width: 100%;
    height: 18px;
    padding: 0 3px 2px;
    border: 1px solid #f1efe2;
    background: none;
    appearance: none;
}

.combo svg {
    grid-area: 1 / 1;
    justify-self: end;
    width: 11px;
    height: 14px;
    margin-right: 2px;
    pointer-events: none;
}

.combo.narrow {
    width: 58px;
}

.combo.wide {
    width: 79px;
}

.combo.short {
    width: 54px;
}

/* 主体 */
.work {
    display: flex;
    flex: 1;
    min-height: 0;
    padding-top: 1px;
}

.cap {
    display: flex;
    flex: none;
    align-items: center;
    justify-content: space-between;
    height: 16px;
    border: 1px solid #8c8a80;
    border-left: 0;
    font-size: 13px;
    font-weight: normal;
    line-height: 14px;
}

.cap span {
    display: flex;
    gap: 8px;
    padding-right: 3px;
}

.cap button,
.cap svg {
    display: block;
    width: 10px;
    height: 10px;
}

.cap-active {
    border: 0;
    background: #0054e3;
    color: #fff;
}

.nav {
    display: flex;
    flex: none;
    flex-direction: column;
    width: 156px;
    margin-right: 4px;
    border-right: 1px solid #d8d5c4;
}

.mod {
    flex: none;
    height: 22px;
    padding-right: 12px;
    border-top: 1px solid #fff;
    border-bottom: 1px solid #aca899;
}

.nav-tools {
    display: flex;
    flex: none;
    align-items: center;
    gap: 8px;
    height: 28px;
    margin-left: -7px;
    background: linear-gradient(#f4f3ec, #ebe8d8);
}

.treebox {
    display: flex;
    flex: 1;
    min-height: 0;
    overflow: hidden;
    border: 1px solid #7f9db9;
    border-left: 0;
    background: #fff;
}

.tree {
    flex: 1;
    padding-top: 1px;
    background: repeating-linear-gradient(#a8a698 0 1px, transparent 1px 2px) 2px 0 / 1px 100% no-repeat;
}

.tree li {
    display: flex;
    flex-wrap: wrap;
    align-items: center;
}

.tree a {
    height: 16px;
    margin-left: 3px;
    padding: 0 2px;
    white-space: nowrap;
    line-height: 15px;
}

.tree .cur {
    padding-right: 5px;
    background: #ece9d8;
}

.tg {
    width: 9px;
    height: 9px;
    margin-left: -2px;
    margin-right: 5px;
    border: 1px solid #7f98b5;
    background: #f4f2ea;
    font: 9px/7px "DejaVu Sans", sans-serif;
}

.tree ul {
    flex: 0 0 100%;
    padding-left: 21px;
}

.tree ul li::before {
    content: "";
    width: 11px;
    height: 16px;
    background:
        repeating-linear-gradient(#a8a698 0 1px, transparent 1px 2px) 0 0 / 1px 100% no-repeat,
        repeating-linear-gradient(90deg, #a8a698 0 1px, transparent 1px 2px) 0 8px / 11px 1px no-repeat;
}

.tree ul li:last-child::before {
    background-size: 1px 50%, 11px 1px;
}

.scroll {
    display: flex;
    flex: none;
    flex-direction: column;
    gap: 2px;
    width: 18px;
    padding: 2px;
    background: #f5f5f0;
}

.scroll button {
    height: 15px;
    border-radius: 2px;
    background: #c6d5fb;
    line-height: 0;
}

.scroll svg {
    width: 10px;
    height: 10px;
}

.thumb {
    flex: 1;
    border: 1px solid #a9bff0;
    border-radius: 2px;
    background:
        repeating-linear-gradient(#eef4fe 0 1px, #8cb0f8 1px 2px) center 50% / 7px 8px no-repeat,
        linear-gradient(90deg, #cbd9fd, #b8ccf8);
}

.dock {
    display: flex;
    flex: none;
    flex-direction: column;
    gap: 6px;
    width: 288px;
    margin-right: 5px;
}

.list {
    display: flex;
    flex-direction: column;
    height: 206px;
}

.list-tools {
    display: flex;
    flex: none;
    align-items: center;
    gap: 7px;
    height: 26px;
    padding-left: 5px;
    background: linear-gradient(90deg, #f6f5ee, #ece9d8);
}

.search {
    display: flex;
    flex: none;
    align-items: center;
    gap: 4px;
    height: 26px;
    margin-bottom: 1px;
}

.search input {
    width: 264px;
    height: 24px;
    padding: 0 2px 4px;
    border: 1px solid #7f9db9;
    background: #fff;
}

.search input::placeholder {
    color: #808080;
}

.sheet {
    flex: 1;
    padding: 1px;
    border: 1px solid #7f9db9;
    background: #fff;
}

table {
    border-collapse: collapse;
    table-layout: fixed;
}

th {
    font-weight: normal;
}

.names {
    width: 100%;
}

.names th,
.a-val {
    background: linear-gradient(#fad59a, #f3c265);
    color: #600050;
}

.names th {
    height: 21px;
}

.names td {
    height: 20px;
    padding-left: 20px;
    border: 1px solid #c8cfd8;
    border-left: 0;
    background: #dfe8f5;
}

.names .no {
    width: 26px;
    padding: 0;
    text-align: center;
}

.names th.no {
    background: #f7f6f0;
}

.names td.no {
    background: #fbd89a;
    color: #600050;
}

.props {
    display: flex;
    flex: 1;
    flex-direction: column;
}

.attrs {
    width: 180px;
}

.attrs th,
.attrs td {
    height: 21px;
    padding: 0 2px;
    border: 1px solid #c0c0c0;
    border-left: 0;
    line-height: 15px;
    text-align: left;
    vertical-align: middle;
    white-space: nowrap;
}

.attrs th {
    border-top: 0;
}

.attrs .a-name {
    width: 84px;
    background: linear-gradient(#fdfdfb, #ece9d8);
}

.attrs .a-val {
    width: 64px;
}

.attrs .a-add {
    width: 32px;
    padding: 0 1px;
    background: linear-gradient(#fdfdfb, #ece9d8);
}

.attrs .lead {
    padding-left: 20px;
}

.attrs .blue {
    color: #00f;
}

.attrs .picked {
    background: #dfe8f5;
}

.attrs .raised {
    padding-bottom: 4px;
}

.attrs .grp td {
    height: 19px;
}

.attrs input {
    display: block;
    width: 13px;
    height: 13px;
    border: 1px solid #1c5180;
    background: linear-gradient(135deg, #dcdcd7, #fff);
    appearance: none;
}

.ex {
    width: 12px;
    height: 12px;
    margin-right: 6px;
    border: 1px solid #c0c0c0;
    background: #f4f3ee;
    font: 12px/10px "Liberation Sans", sans-serif;
}

/* 绘图区 */
.stage {
    display: flex;
    flex: 1;
    flex-direction: column;
    min-width: 0;
}

.draw {
    display: flex;
    flex: none;
    align-items: center;
    gap: 6px;
    height: 25px;
    margin-bottom: 26px;
    padding-left: 2px;
    border-bottom: 1px solid #c5c2b0;
    background: linear-gradient(#f3f2e8, #e9e6d4);
}

.draw .grip {
    margin-right: -2px;
}

.draw .select {
    margin-right: -3px;
    border-right: 0;
    border-radius: 3px 0 0 3px;
}

.smart {
    position: relative;
    margin: 0 -3px;
}

.smart .pressed {
    height: 22px;
    padding: 0 2px 0 3px;
    border: 1px solid #8f8d82;
    border-radius: 3px;
    background: #e2dfd0;
}

.menu {
    position: absolute;
    top: 22px;
    left: 0;
    z-index: 2;
    width: 183px;
    padding: 1px 0 3px;
    border: 1px solid #aca899;
    background: #fff;
    box-shadow: 3px 3px 3px rgba(0, 0, 0, 0.4);
}

.menu button {
    display: block;
    width: 100%;
    height: 20px;
    padding-left: 24px;
    text-align: left;
}

.view {
    display: flex;
    flex: 1;
    min-height: 0;
}

.edit {
    flex: none;
    width: 26px;
    overflow: hidden;
    border-right: 1px solid #aca899;
    border-left: 1px solid #fff;
}

.hgrip {
    display: block;
    width: 18px;
    height: 2px;
    margin: 2px auto;
    background: repeating-linear-gradient(90deg, #a8a698 0 2px, transparent 2px 4px);
}

.edit button {
    display: flex;
    flex-direction: column;
    align-items: center;
    gap: 4px;
    width: 100%;
    padding: 3px 0;
}

.edit span {
    width: 12px;
    line-height: 12px;
    white-space: normal;
}

.edit button:disabled {
    color: #aca899;
}

.edit hr {
    height: 1px;
    margin: 3px 2px;
    border: 0;
    background: #c5c2b0;
}

.side {
    display: block;
    width: 0;
    height: 6px;
    margin: 0 auto;
    border: 3px solid transparent;
    border-right-color: #aca899;
    border-left: 0;
}

.canvas {
    flex: 1;
    min-width: 0;
    background: #000;
}

.canvas svg {
    display: block;
    width: 100%;
    height: 100%;
}

.axis {
    fill: #ddd;
    font: 14px "Liberation Mono", monospace;
    text-anchor: middle;
}

.zaxis {
    fill: #0080ff;
    font: 14px "Liberation Sans", sans-serif;
}

.notes {
    position: fixed;
    top: 0;
    left: 0;
    z-index: 3;
    width: 100%;
    height: 100%;
    pointer-events: none;
}
```
